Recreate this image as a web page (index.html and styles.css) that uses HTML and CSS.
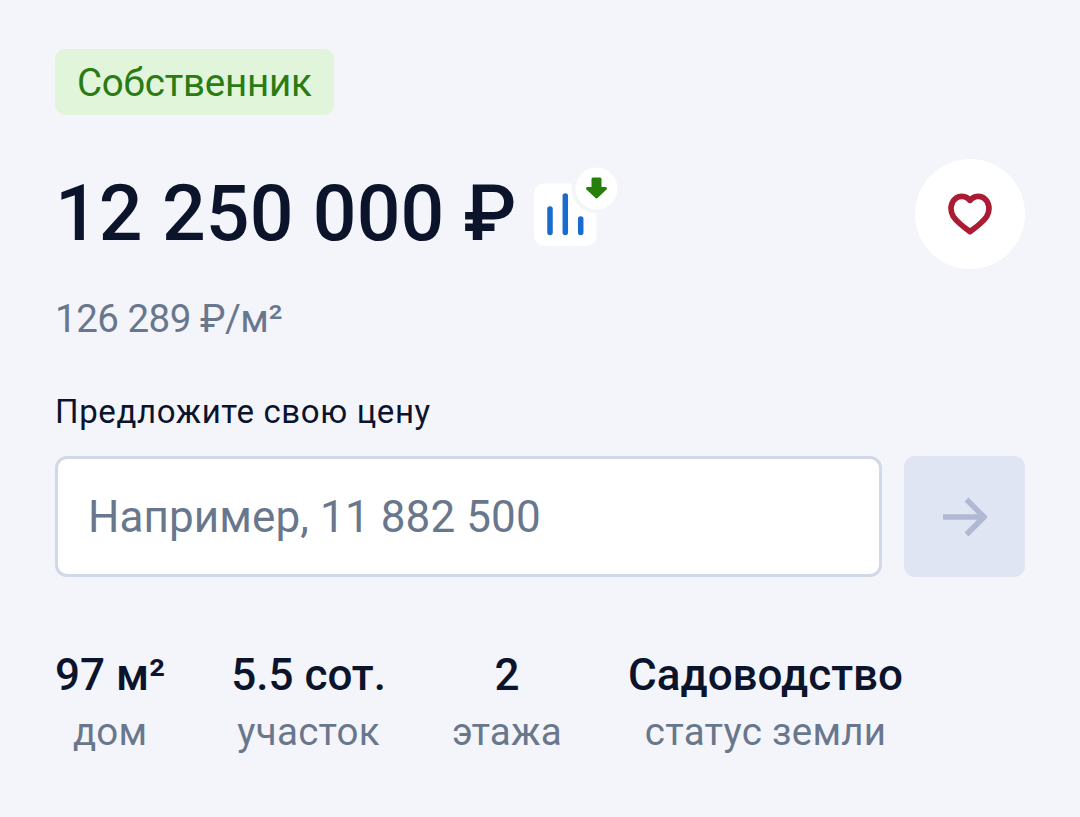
FILE: index.html
```html
<!DOCTYPE html>
<html lang="ru">
<head>
<meta charset="utf-8">
<title>Объявление</title>
<link rel="stylesheet" href="styles.css">
</head>
<body>
<main class="offer">
  <span class="badge">Собственник</span>
  <div class="price-row">
    <h1 class="price">12 250 000 ₽</h1>
    <svg class="trend" viewBox="0 0 84 84" aria-hidden="true">
      <rect x="0" y="20.500" width="62.500" height="62.500" rx="10" fill="#fff"/>
      <path d="M16 46v23.500M31.300 33v36.500M46.700 56v13.500" stroke="#186ccd" stroke-width="5.500" stroke-linecap="round"/>
      <circle cx="62.500" cy="25.500" r="25" fill="#f4f5fb"/>
      <circle cx="62.500" cy="25.500" r="21" fill="#fff"/>
      <path d="M59 16h7v9.500h5.500L62.500 34l-9-8.500H59z" fill="#257f0a" stroke="#257f0a" stroke-width="3" stroke-linejoin="round"/>
    </svg>
    <button class="favorite" aria-label="В избранное">
      <svg viewBox="0 0 44 42" aria-hidden="true">
        <path d="M22 7.300C18.500 3.200 12.500 2.200 8.200 5C2.500 9 1.500 17 5.300 23.500C9 29 15.500 34 22 38.600C28.500 34 35 29 38.700 23.500C42.500 17 41.500 9 35.800 5C31.500 2.200 25.500 3.200 22 7.300Z" fill="none" stroke="#ab1b34" stroke-width="5.700" stroke-linejoin="round"/>
      </svg>
    </button>
  </div>
  <p class="unit-price">126 289 ₽/м²</p>
  <label class="bid-label" for="bid">Предложите свою цену</label>
  <div class="bid">
    <input class="bid-input" id="bid" placeholder="Например, 11 882 500">
    <button class="bid-send" aria-label="Отправить">
      <svg viewBox="0 0 44 40" aria-hidden="true">
        <path d="M0 20h39.500M23.500 2.500L41 20L23.500 37.500" fill="none" stroke="#b0b8d3" stroke-width="5.500"/>
      </svg>
    </button>
  </div>
  <dl class="facts">
    <div class="fact"><dt>97 м²</dt><dd>дом</dd></div>
    <div class="fact"><dt>5.5 сот.</dt><dd>участок</dd></div>
    <div class="fact"><dt>2</dt><dd>этажа</dd></div>
    <div class="fact"><dt>Садоводство</dt><dd>статус земли</dd></div>
  </dl>
</main>
</body>
</html>
```
FILE: styles.css
```css
* { box-sizing: border-box; margin: 0; padding: 0; }

body {
  background: #f4f5fb;
  color: #0b142b;
  font-family: Roboto, "Noto Sans", sans-serif;
}

button { border: 0; font: inherit; }

.offer {
  display: flex;
  flex-direction: column;
  align-items: stretch;
  height: 817px;
  padding: 49px 55px 0;
}

.badge {
  align-self: flex-start;
  height: 66px;
  padding: 0 22px;
  border-radius: 10px;
  background: #e0f5da;
  color: #2a7b14;
  font-size: 38.5px;
  letter-spacing: -0.2px;
  line-height: 68px;
}

.price-row {
  display: flex;
  align-items: center;
  height: 110px;
  margin-top: 44px;
}

.price {
  font-size: 77px;
  font-weight: 500;
  letter-spacing: 0.1px;
  line-height: 88px;
  white-space: nowrap;
}

.trend {
  width: 84px;
  height: 84px;
  margin: 0 0 19px 17.5px;
}

.favorite {
  display: grid;
  place-items: center;
  width: 110px;
  height: 110px;
  margin-left: auto;
  border-radius: 50%;
  background: #fff;
}

.favorite svg { width: 44px; height: 42px; }

.unit-price {
  margin-top: 22px;
  color: #69778d;
  font-size: 38.5px;
  letter-spacing: -0.5px;
  line-height: 55px;
}

.bid-label {
  margin-top: 44px;
  font-size: 33px;
  letter-spacing: 0.62px;
  line-height: 44px;
}

.bid {
  display: flex;
  gap: 22px;
  height: 121px;
  margin-top: 22px;
}

.bid-input {
  flex: 1;
  min-width: 0;
  padding: 0 30px;
  border: 3px solid #d0d9e5;
  border-radius: 12px;
  background: #fff;
  font: 44px Roboto, "Noto Sans", sans-serif;
  letter-spacing: 0.1px;
}

.bid-input::placeholder { color: #69778d; opacity: 1; }

.bid-send {
  display: grid;
  place-items: center;
  width: 121px;
  border-radius: 11px;
  background: #e0e5f3;
}

.bid-send svg { width: 44px; height: 40px; }

.facts {
  display: flex;
  gap: 66px;
  margin-top: 68px;
  text-align: center;
  white-space: nowrap;
}

.fact dt {
  font-size: 44px;
  font-weight: 500;
  line-height: 60px;
}

.fact dd {
  color: #69778d;
  font-size: 38.5px;
  letter-spacing: 0.25px;
  line-height: 54px;
}
```
